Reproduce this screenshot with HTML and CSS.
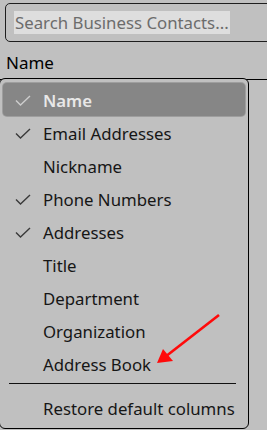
FILE: index.html
```html
<!DOCTYPE html>
<html lang="en">
<head>
<meta charset="utf-8">
<title>Business Contacts</title>
<link rel="stylesheet" href="styles.css">
</head>
<body>
<div class="page">
  <div class="search"><span class="placeholder">Search Business Contacts...</span></div>
  <div class="col-header"><span class="col-title">Name</span></div>
  <div class="rows">
    <div class="row">Aaron Hunt</div>
  </div>

  <div class="menu">
    <div class="item active"><span class="check"><svg viewBox="0 0 16 11" width="16" height="11"><path d="M1 5.5 L5.5 10 L15 1" fill="none" stroke="currentColor" stroke-width="1.4"/></svg></span><span class="label">Name</span></div>
    <div class="item"><span class="check"><svg viewBox="0 0 16 11" width="16" height="11"><path d="M1 5.5 L5.5 10 L15 1" fill="none" stroke="currentColor" stroke-width="1.4"/></svg></span><span class="label">Email Addresses</span></div>
    <div class="item"><span class="check"></span><span class="label">Nickname</span></div>
    <div class="item"><span class="check"><svg viewBox="0 0 16 11" width="16" height="11"><path d="M1 5.5 L5.5 10 L15 1" fill="none" stroke="currentColor" stroke-width="1.4"/></svg></span><span class="label">Phone Numbers</span></div>
    <div class="item"><span class="check"><svg viewBox="0 0 16 11" width="16" height="11"><path d="M1 5.5 L5.5 10 L15 1" fill="none" stroke="currentColor" stroke-width="1.4"/></svg></span><span class="label">Addresses</span></div>
    <div class="item"><span class="check"></span><span class="label">Title</span></div>
    <div class="item"><span class="check"></span><span class="label">Department</span></div>
    <div class="item"><span class="check"></span><span class="label">Organization</span></div>
    <div class="item"><span class="check"></span><span class="label">Address Book</span></div>
    <div class="separator"></div>
    <div class="item"><span class="check"></span><span class="label">Restore default columns</span></div>
  </div>

  <svg class="arrow" width="267" height="430" viewBox="0 0 267 430">
    <line x1="219" y1="315" x2="165" y2="357" stroke="#ff0a0a" stroke-width="2.6"/>
    <polygon points="157,363 163,349 173,361" fill="#ff0a0a"/>
  </svg>
</div>
</body>
</html>
```

FILE: styles.css
```css
html, body {
  margin: 0;
  padding: 0;
}
body {
  background: #c0c0c0;
  font-family: "Noto Sans", "Open Sans", sans-serif;
  color: #111;
  overflow: hidden;
  width: 267px;
  height: 430px;
}
.page {
  position: relative;
  width: 267px;
  height: 430px;
  overflow: hidden;
}
.search {
  margin: 3px -12px 0 5px;
  height: 37px;
  border: 1px solid #1e1e1e;
  border-radius: 5px;
  display: flex;
  align-items: center;
  padding-left: 8px;
}
.placeholder {
  background: #dedede;
  color: #6c6c6c;
  font-size: 16.8px;
  line-height: 23px;
  height: 23px;
  padding: 0 1px;
  white-space: nowrap;
}
.col-header {
  height: 37px;
  border-bottom: 1px solid #000;
  display: flex;
  align-items: center;
  padding: 4px 0 0 6px;
  box-sizing: border-box;
  height: 38px;
}
.col-title {
  font-size: 17px;
  color: #000;
}
.rows {
  padding: 339px 8px 0;
}
.row {
  height: 33px;
  line-height: 33px;
  font-size: 16.8px;
}
.menu {
  position: absolute;
  left: -1px;
  top: 78px;
  width: 250px;
  height: 351px;
  box-sizing: border-box;
  border: 1px solid #000;
  border-radius: 6px;
  background: #c0c0c0;
  padding: 4px 3px 0 3px;
}
.item {
  height: 33px;
  display: flex;
  align-items: center;
  border-radius: 4px;
  font-size: 16.8px;
  color: #161616;
}
.item.active {
  background: #868686;
  box-shadow: 0 0 0 1px #9e9e9e;
  color: #e8e8e8;
  font-weight: 600;
}
.check {
  width: 40px;
  flex: none;
  display: flex;
  align-items: center;
  padding: 2px 0 0 12px;
  box-sizing: border-box;
  color: #3a3a3a;
}
.item.active .check {
  color: #cdcdcd;
}
.check svg {
  display: block;
}
.label {
  white-space: nowrap;
  padding-top: 2px;
}
.separator {
  height: 1px;
  background: #111;
  margin: 3px 9px 7px 6px;
}
.arrow {
  position: absolute;
  left: 0;
  top: 0;
  pointer-events: none;
}
```
